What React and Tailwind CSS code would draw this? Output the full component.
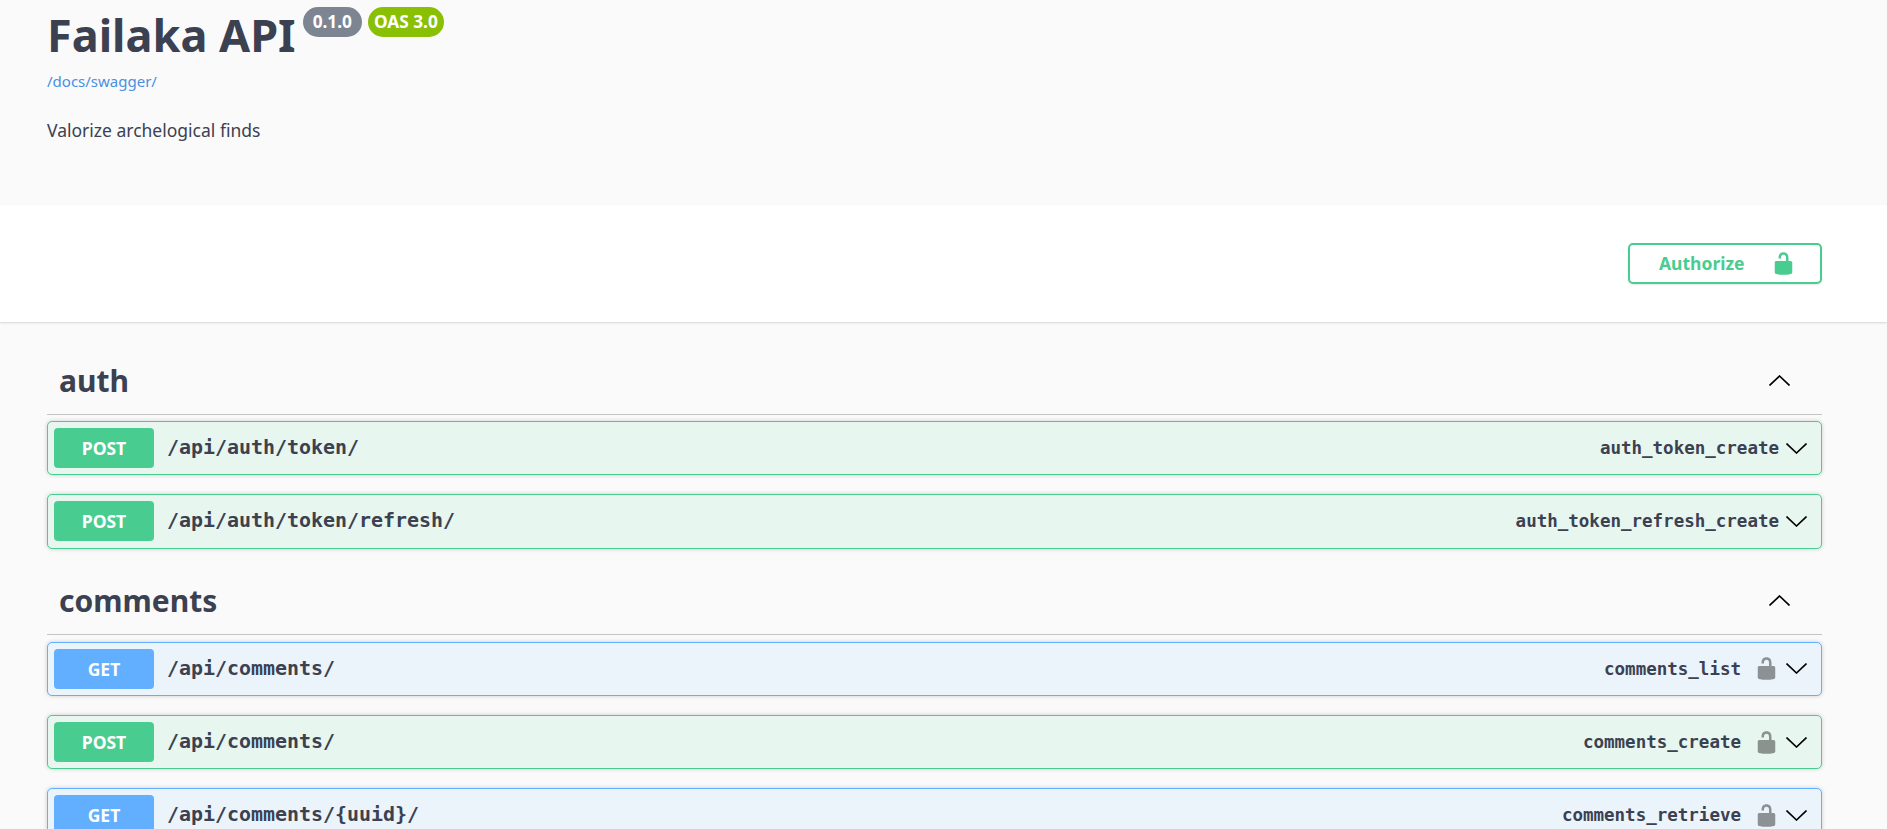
import React from 'react';

const LOCK = 'M15.8 8H14V5.6C14 2.703 12.665 1 10 1 7.334 1 6 2.703 6 5.6V6h2v-.801C8 3.754 8.797 3 10 3c1.203 0 2 .754 2 2.199V8H4c-.553 0-1 .646-1 1.199V17c0 .549.428 1.139.951 1.307l1.197.387C5.672 18.861 6.55 19 7.1 19h5.8c.549 0 1.428-.139 1.951-.307l1.196-.387c.524-.167.953-.757.953-1.306V9.199C17 8.646 16.352 8 15.8 8z';

const MONO = { fontFamily: '"DejaVu Sans Mono", monospace' };

const LockIcon = ({ className }) => (
  <svg viewBox="0 0 20 20" className={className}>
    <path d={LOCK} />
  </svg>
);

const Chevron = ({ up }) => (
  <svg viewBox="0 0 21 11" className="h-[11px] w-[21px]" fill="none" stroke="#000" strokeWidth="1.6">
    <polyline points={up ? '0.5,10.5 10.5,1 20.5,10.5' : '0.5,0.5 10.5,10 20.5,0.5'} />
  </svg>
);

const Operation = ({ method, path, id, locked }) => {
  const isGet = method === 'GET';
  return (
    <div
      className={`mb-[18.8px] flex h-[54.4px] items-center rounded-[5px] border pl-[6px] pr-[13px] shadow-[0_0_4px_rgba(0,0,0,0.19)] ${
        isGet ? 'border-[#61affe] bg-[#ebf3fb]' : 'border-[#49cc90] bg-[#e7f6ef]'
      }`}
    >
      <div
        className={`flex h-[40px] w-[100px] items-center justify-center rounded-[4px] text-[17.5px] font-bold text-white ${
          isGet ? 'bg-[#61affe]' : 'bg-[#49cc90]'
        }`}
      >
        {method}
      </div>
      <div style={MONO} className="ml-[13px] flex-1 text-[19.95px] font-semibold text-[#3b4151]">
        {path}
      </div>
      <div style={MONO} className="text-[17.5px] font-semibold text-[#3b4151]">
        {id}
      </div>
      {locked && <LockIcon className="ml-[13px] h-[25px] w-[25px] fill-[#000] opacity-40" />}
      <div className="ml-[6px] flex w-[23px] justify-center">
        <Chevron />
      </div>
    </div>
  );
};

const Section = ({ name, children }) => (
  <section className="pb-[6px]">
    <div className="flex h-[62px] items-center justify-between border-b border-[#c4c4c6] pb-[6px] pl-[12px] pr-[30px]">
      <h3 className="text-[30px] font-bold text-[#3b4151]">{name}</h3>
      <div className="flex w-[26px] justify-center">
        <Chevron up />
      </div>
    </div>
    <div className="pt-[6.4px]">{children}</div>
  </section>
);

export default function App() {
  return (
    <div className="h-[829px] overflow-hidden bg-[#fafafa]" style={{ fontFamily: '"Noto Sans", sans-serif' }}>
      {/* Info */}
      <div className="h-[205px] pl-[47px] text-[#3b4151]">
        <div className="flex items-start">
          <h2 className="text-[45px] font-bold leading-[70px]">Failaka API</h2>
          <span className="ml-[7px] mt-[7px] rounded-full bg-[#7d8492] px-[10px] text-[17.25px] font-bold leading-[30px] text-white">
            0.1.0
          </span>
          <span className="ml-[6px] mt-[7px] rounded-full bg-[#89bf04] px-[6px] text-[17.25px] font-bold leading-[30px] text-white">
            OAS 3.0
          </span>
        </div>
        <a className="mt-[1px] block text-[15px] leading-[20px] text-[#4990e2]">/docs/swagger/</a>
        <p className="mt-[25px] text-[17.5px] leading-[28px]">Valorize archelogical finds</p>
      </div>

      {/* Schemes */}
      <div className="flex h-[117px] items-center justify-end bg-white pr-[65px] shadow-[0_1px_2px_rgba(0,0,0,0.15)]">
        <button className="flex h-[41px] w-[194px] items-center rounded-[5px] border-2 border-[#49cc90] pl-[29px] text-[17.5px] font-bold text-[#49cc90] shadow-[0_1px_2px_rgba(0,0,0,0.1)]">
          <span>Authorize</span>
          <LockIcon className="ml-[26px] h-[25px] w-[25px] fill-[#49cc90]" />
        </button>
      </div>

      {/* Operations */}
      <div className="ml-[47px] w-[1775px] pt-[30.6px]">
        <Section name="auth">
          <Operation method="POST" path="/api/auth/token/" id="auth_token_create" />
          <Operation method="POST" path="/api/auth/token/refresh/" id="auth_token_refresh_create" />
        </Section>
        <Section name="comments">
          <Operation method="GET" path="/api/comments/" id="comments_list" locked />
          <Operation method="POST" path="/api/comments/" id="comments_create" locked />
          <Operation method="GET" path="/api/comments/{uuid}/" id="comments_retrieve" locked />
        </Section>
      </div>
    </div>
  );
}
